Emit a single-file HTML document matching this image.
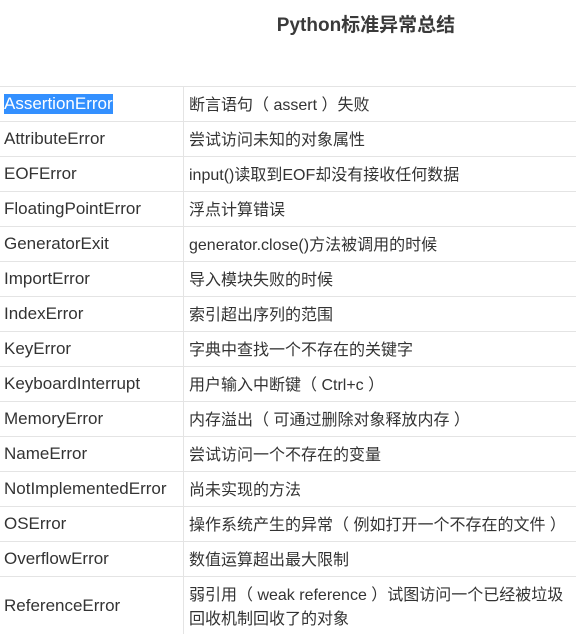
<!DOCTYPE html>
<html><head><meta charset="utf-8"><style>
body{margin:0;width:576px;height:635px;overflow:hidden;background:#fff;font-family:"Liberation Sans","Noto Sans CJK SC",sans-serif;color:#333;}
.t{position:absolute;left:266px;top:10px;width:200px;text-align:center;font-size:19px;font-weight:bold;color:#3a3a3a;}
table{position:absolute;top:86px;left:0;border-collapse:collapse;width:590px;font-size:16px;}
td{border-top:1px solid #e4e4e4;height:34px;padding:0;vertical-align:top;}
td div{height:34px;line-height:34px;white-space:nowrap;}
td.a{width:179px;padding-left:4px;border-right:1px solid #e4e4e4;font-size:17px;}
td.b{padding-left:5px;}
td.b div{position:relative;top:2px;}
.sel{background:#3390ff;color:#fff;line-height:20px;display:inline-block;}
tr.l td{height:57px;}
tr.l td.a div{height:57px;line-height:57px;}
tr.l td.b div{height:57px;line-height:24px;padding-top:5px;box-sizing:border-box;}
</style></head><body>
<div class="t">Python标准异常总结</div>
<table>
<tr><td class="a"><div><span class="sel">AssertionError</span></div></td><td class="b"><div>断言语句（ assert ）失败</div></td></tr>
<tr><td class="a"><div>AttributeError</div></td><td class="b"><div>尝试访问未知的对象属性</div></td></tr>
<tr><td class="a"><div>EOFError</div></td><td class="b"><div>input()读取到EOF却没有接收任何数据</div></td></tr>
<tr><td class="a"><div>FloatingPointError</div></td><td class="b"><div>浮点计算错误</div></td></tr>
<tr><td class="a"><div>GeneratorExit</div></td><td class="b"><div>generator.close()方法被调用的时候</div></td></tr>
<tr><td class="a"><div>ImportError</div></td><td class="b"><div>导入模块失败的时候</div></td></tr>
<tr><td class="a"><div>IndexError</div></td><td class="b"><div>索引超出序列的范围</div></td></tr>
<tr><td class="a"><div>KeyError</div></td><td class="b"><div>字典中查找一个不存在的关键字</div></td></tr>
<tr><td class="a"><div>KeyboardInterrupt</div></td><td class="b"><div>用户输入中断键（ Ctrl+c ）</div></td></tr>
<tr><td class="a"><div>MemoryError</div></td><td class="b"><div>内存溢出（ 可通过删除对象释放内存 ）</div></td></tr>
<tr><td class="a"><div>NameError</div></td><td class="b"><div>尝试访问一个不存在的变量</div></td></tr>
<tr><td class="a"><div>NotImplementedError</div></td><td class="b"><div>尚未实现的方法</div></td></tr>
<tr><td class="a"><div>OSError</div></td><td class="b"><div>操作系统产生的异常（ 例如打开一个不存在的文件 ）</div></td></tr>
<tr><td class="a"><div>OverflowError</div></td><td class="b"><div>数值运算超出最大限制</div></td></tr>
<tr class="l"><td class="a"><div>ReferenceError</div></td><td class="b"><div>弱引用（ weak reference ）试图访问一个已经被垃圾<br>回收机制回收了的对象</div></td></tr>
</table>
</body></html>
